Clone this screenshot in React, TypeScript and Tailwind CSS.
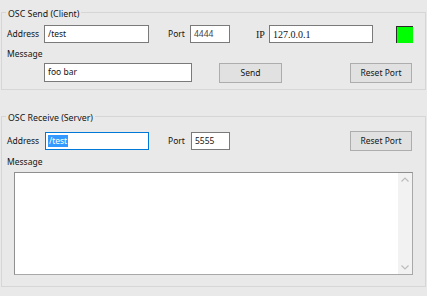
import React from "react";

function Group({ title, className, children }: { title: string; className: string; children: React.ReactNode }) {
  return (
    <fieldset className={className}>
      <legend className="ml-[4px] px-[2px] pt-[4px] leading-[12px] text-[8.8px]">{title}</legend>
      {children}
    </fieldset>
  );
}

function Btn({ label, className }: { label: string; className: string }) {
  return (
    <div className={"flex items-center justify-center border border-[#adadad] bg-[#e1e1e1] h-[20px] " + className}>
      {label}
    </div>
  );
}

export default function App() {
  return (
    <div className="w-[427px] h-[296px] overflow-hidden bg-[#e9e9e9] pt-[4px] text-[8.5px] text-[#141414] font-['Noto_Sans',sans-serif]">
      <Group title="OSC Send (Client)" className="mx-[1px] border border-[#d6d6d6] pb-[6px]">
        <div className="mt-[5px] flex h-[18px] items-center">
          <span className="ml-[5px] w-[37px]">Address</span>
          <div className="flex h-[18px] w-[105px] items-center border border-[#7a7a7a] bg-white pl-[3px]">/test</div>
          <span className="ml-[19px] w-[22px]">Port</span>
          <div className="flex h-[18px] w-[40px] items-center border border-[#7a7a7a] bg-white pl-[3px] text-[#444]">4444</div>
          <span className="ml-[26px] w-[13px] font-['Liberation_Serif',serif] text-[10px]">IP</span>
          <div className="flex h-[18px] w-[104px] items-center border border-[#7a7a7a] bg-white pl-[3px] font-['Liberation_Serif',serif] text-[10px]">127.0.0.1</div>
          <div className="ml-[23px] h-[17px] w-[17px] border-l border-t border-[#2a2a2a] bg-[#00ff00]" />
        </div>
        <div className="mt-[5px] ml-[5px] leading-[12px]">Message</div>
        <div className="mt-[3px] flex h-[20px] items-start">
          <div className="ml-[42px] flex h-[19px] w-[148px] items-center border border-[#7a7a7a] bg-white pl-[3px]">foo bar</div>
          <Btn label="Send" className="ml-[27px] w-[63px]" />
          <Btn label="Reset Port" className="ml-[68px] w-[62px]" />
        </div>
      </Group>

      <Group title="OSC Receive (Server)" className="mx-[1px] mt-[18px] border border-[#d6d6d6] pb-[11px]">
        <div className="mt-[7px] flex h-[20px] items-center">
          <span className="ml-[5px] w-[38px]">Address</span>
          <div className="flex h-[18px] w-[104px] items-center border border-[#0078d7] bg-white pl-[2px]">
            <span className="bg-[#3399ff] px-[1px] leading-[12px] text-white">/test</span>
          </div>
          <span className="ml-[19px] w-[23px]">Port</span>
          <div className="flex h-[18px] w-[39px] items-center border border-[#7a7a7a] bg-white pl-[3px]">5555</div>
          <Btn label="Reset Port" className="ml-[120px] w-[62px]" />
        </div>
        <div className="mt-[5px] ml-[5px] leading-[12px]">Message</div>
        <div className="mt-[4px] ml-[12px] flex h-[103px] w-[399px] border border-[#a8a8a8] border-l-[#8f8f8f] border-t-[#8f8f8f] bg-white">
          <div className="flex-1" />
          <div className="flex w-[14px] flex-col items-center justify-between bg-[#f2f2f2] py-[4px]">
            <svg width="8" height="5" viewBox="0 0 8 5"><path d="M0.5 4.5 L4 1 L7.5 4.5" fill="none" stroke="#bdbdbd" strokeWidth="1.2" /></svg>
            <svg width="8" height="5" viewBox="0 0 8 5"><path d="M0.5 0.5 L4 4 L7.5 0.5" fill="none" stroke="#bdbdbd" strokeWidth="1.2" /></svg>
          </div>
        </div>
      </Group>
    </div>
  );
}
